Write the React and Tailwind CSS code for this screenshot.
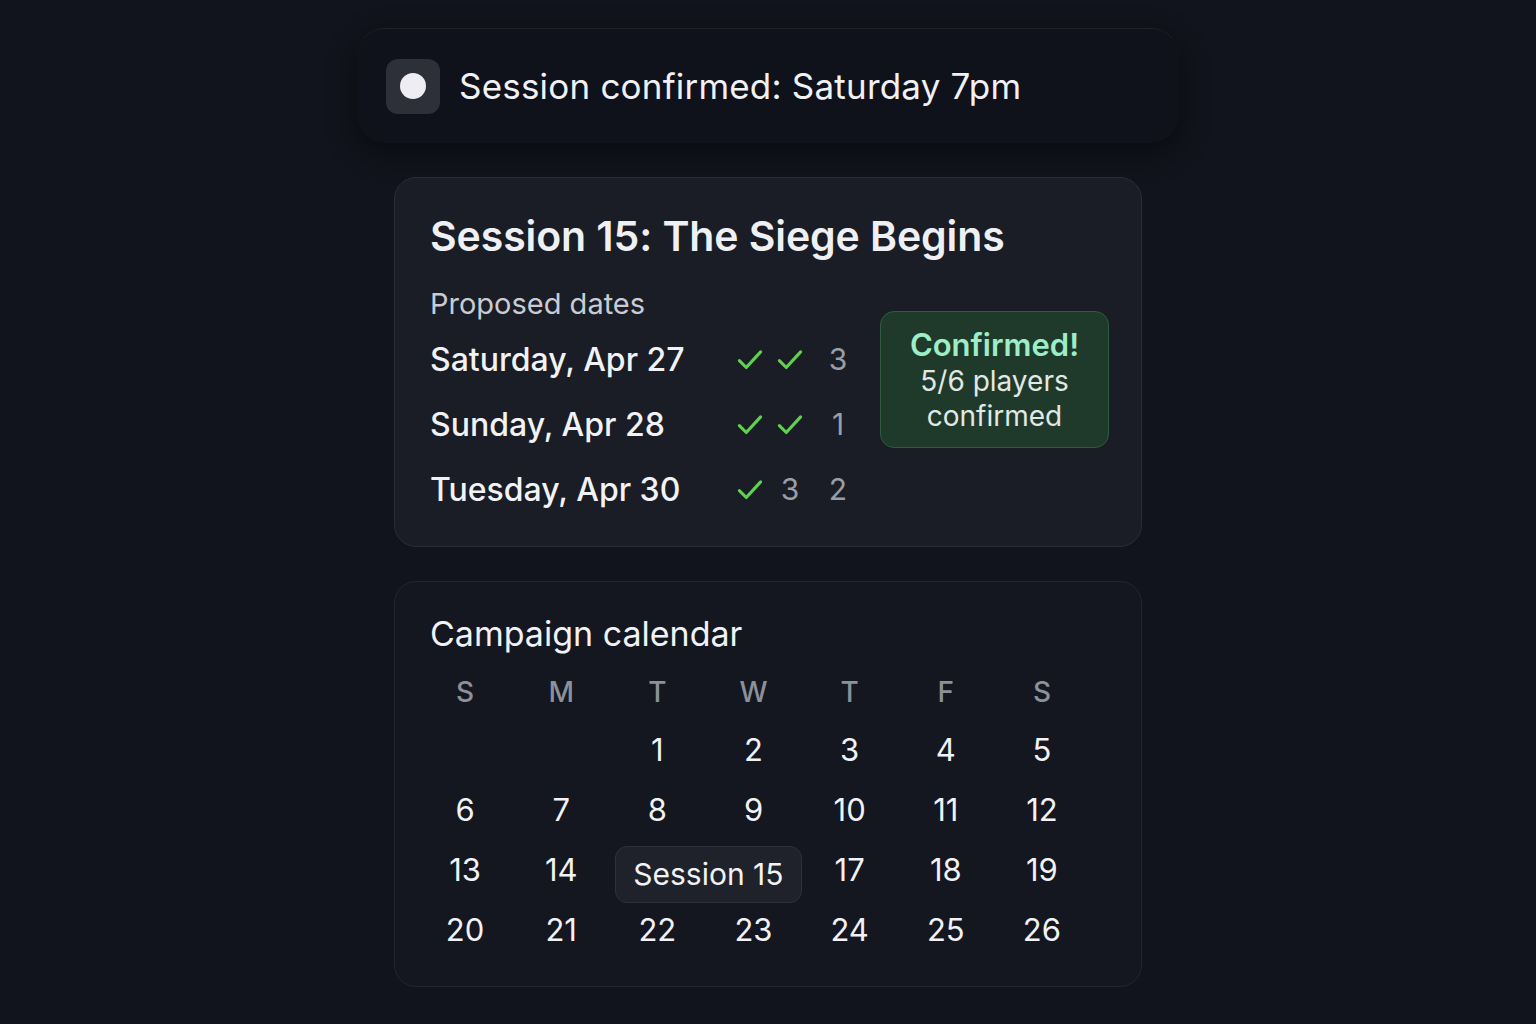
import React from 'react';

const font = { fontFamily: 'Inter, "Noto Sans", sans-serif' };

function Check() {
  return (
    <svg width="30" height="30" viewBox="0 0 24 24" fill="none" stroke="#5fd14f" strokeWidth="2.5" strokeLinecap="round" strokeLinejoin="round">
      <polyline points="3.5 12.5 9 18 20.5 5.5" />
    </svg>
  );
}

const dates = [
  { label: 'Saturday, Apr 27', marks: ['check', 'check', '3'] },
  { label: 'Sunday, Apr 28', marks: ['check', 'check', '1'] },
  { label: 'Tuesday, Apr 30', marks: ['check', '3', '2'] },
];

const weekdays = ['S', 'M', 'T', 'W', 'T', 'F', 'S'];

export default function App() {
  return (
    <div style={font} className="min-h-screen w-full bg-[#11141c] flex flex-col items-center pt-[28px] text-white">
      {/* toast */}
      <div className="w-[822px] h-[115px] rounded-[28px] bg-[#0f121a] border-t border-[#20232b] shadow-[0_10px_30px_rgba(0,0,0,0.45)] flex items-center pl-[29px] gap-[19px]">
        <div className="w-[54px] h-[55px] rounded-[12px] bg-[#2d3039] flex items-center justify-center">
          <div className="w-[26px] h-[26px] rounded-full bg-[#eeeef2]" />
        </div>
        <span className="text-[35px] text-[#f0f1f5] tracking-[0.2px]">Session confirmed: Saturday 7pm</span>
      </div>

      {/* session card */}
      <div className="mt-[34px] w-[748px] rounded-[22px] bg-[#1a1d25] border border-[#2a2d36] pl-[35px] pr-[32px] pt-[34px] pb-[24px]">
        <h1 className="text-[41px] font-semibold text-[#eef0f4] leading-[48px] tracking-[-0.1px]">Session 15: The Siege Begins</h1>
        <div className="flex justify-between">
          <div>
            <div className="mt-[27px] text-[29px] text-[#c9ccd3] leading-[34px]">Proposed dates</div>
            <div className="flex flex-col mt-[6px]">
              {dates.map((d) => (
                <div key={d.label} className="flex items-center h-[65px]">
                  <span className="w-[300px] text-[32px] font-medium text-[#f1f2f5]">{d.label}</span>
                  {d.marks.map((m, i) => (
                    <span key={i} className={`w-[40px] flex justify-center text-[30px] text-[#9a9ea7] ${i === 2 ? 'ml-[8px]' : ''}`}>
                      {m === 'check' ? <Check /> : m}
                    </span>
                  ))}
                </div>
              ))}
            </div>
          </div>
          <div className="mt-[51px] w-[229px] h-[137px] rounded-[14px] bg-[#1f3a2b] border border-[#2f5b40] flex flex-col items-center justify-center">
            <span className="text-[31px] font-semibold text-[#9eedc6] leading-[38px]">Confirmed!</span>
            <span className="text-[28px] text-[#e2e8e4] leading-[35px] text-center">5/6 players<br />confirmed</span>
          </div>
        </div>
      </div>

      {/* calendar card */}
      <div className="mt-[34px] w-[748px] rounded-[22px] bg-[#141720] border border-[#23262f] px-[35px] pt-[32px] pb-[26px]">
        <h2 className="text-[34px] text-[#f1f2f5] leading-[40px]">Campaign calendar</h2>
        <div className="-ml-[13px] w-[673px] grid grid-cols-7 mt-[20px]">
          {weekdays.map((w, i) => (
            <div key={i} className="h-[36px] flex items-center justify-center text-[28px] font-medium text-[#8c9099]">{w}</div>
          ))}
        </div>
        <div className="-ml-[13px] w-[673px] grid grid-cols-7 mt-[10px] text-[31px] text-[#f1f2f5]">
          <div className="h-[60px]" />
          <div className="h-[60px]" />
          {[1, 2, 3, 4, 5].map((n) => (
            <div key={n} className="h-[60px] flex items-center justify-center">{n}</div>
          ))}
          {[6, 7, 8, 9, 10, 11, 12].map((n) => (
            <div key={n} className="h-[60px] flex items-center justify-center">{n}</div>
          ))}
          {[13, 14].map((n) => (
            <div key={n} className="h-[60px] flex items-center justify-center">{n}</div>
          ))}
          <div className="col-span-2 h-[60px] flex items-center justify-center">
            <div className="w-[198px] h-[57px] mt-[8px] ml-[6px] rounded-[12px] bg-[#1f222b] border border-[#2e3139] flex items-center justify-center text-[30px]">
              Session 15
            </div>
          </div>
          {[17, 18, 19].map((n) => (
            <div key={n} className="h-[60px] flex items-center justify-center">{n}</div>
          ))}
          {[20, 21, 22, 23, 24, 25, 26].map((n) => (
            <div key={n} className="h-[60px] flex items-center justify-center">{n}</div>
          ))}
        </div>
      </div>
    </div>
  );
}
